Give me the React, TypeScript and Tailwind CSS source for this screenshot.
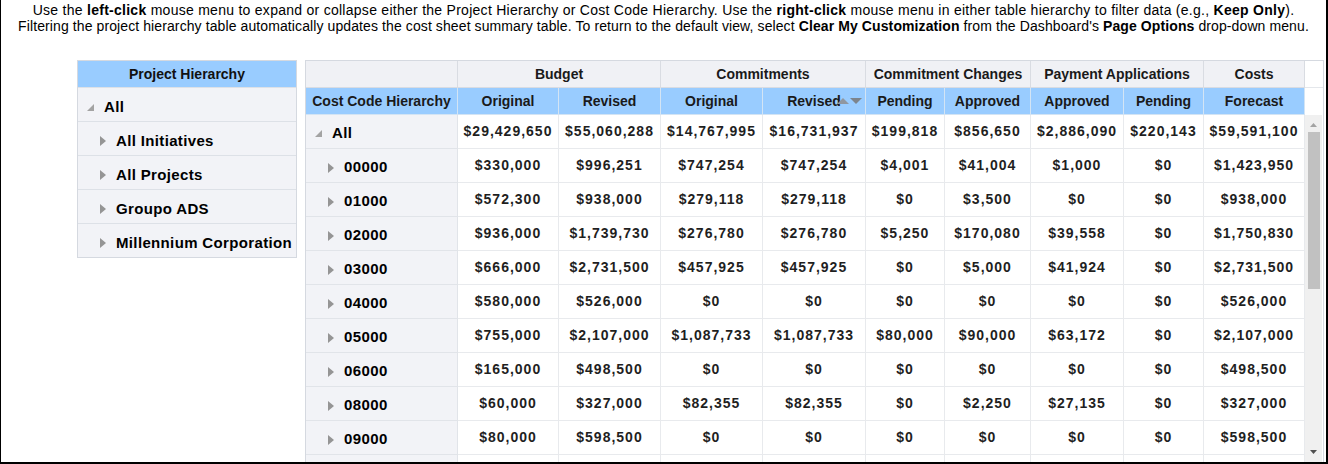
import React from "react";

const cols =
  "grid grid-cols-[152px_101px_102px_102px_103px_79px_86px_93px_80px_101px_18px]";

type Row = { code: string; top?: boolean; values: string[] };

const rows: Row[] = [
  { code: "All", top: true, values: ["$29,429,650", "$55,060,288", "$14,767,995", "$16,731,937", "$199,818", "$856,650", "$2,886,090", "$220,143", "$59,591,100"] },
  { code: "00000", values: ["$330,000", "$996,251", "$747,254", "$747,254", "$4,001", "$41,004", "$1,000", "$0", "$1,423,950"] },
  { code: "01000", values: ["$572,300", "$938,000", "$279,118", "$279,118", "$0", "$3,500", "$0", "$0", "$938,000"] },
  { code: "02000", values: ["$936,000", "$1,739,730", "$276,780", "$276,780", "$5,250", "$170,080", "$39,558", "$0", "$1,750,830"] },
  { code: "03000", values: ["$666,000", "$2,731,500", "$457,925", "$457,925", "$0", "$5,000", "$41,924", "$0", "$2,731,500"] },
  { code: "04000", values: ["$580,000", "$526,000", "$0", "$0", "$0", "$0", "$0", "$0", "$526,000"] },
  { code: "05000", values: ["$755,000", "$2,107,000", "$1,087,733", "$1,087,733", "$80,000", "$90,000", "$63,172", "$0", "$2,107,000"] },
  { code: "06000", values: ["$165,000", "$498,500", "$0", "$0", "$0", "$0", "$0", "$0", "$498,500"] },
  { code: "08000", values: ["$60,000", "$327,000", "$82,355", "$82,355", "$0", "$2,250", "$27,135", "$0", "$327,000"] },
  { code: "09000", values: ["$80,000", "$598,500", "$0", "$0", "$0", "$0", "$0", "$0", "$598,500"] },
];

function Expanded() {
  return (
    <svg width="7" height="7" viewBox="0 0 7 7" className="shrink-0">
      <polygon points="7,0 7,7 0,7" fill="#a3a3a3" />
    </svg>
  );
}

function Collapsed() {
  return (
    <svg width="6" height="10" viewBox="0 0 6 10" className="shrink-0">
      <polygon points="0,0 6,5 0,10" fill="#959595" />
    </svg>
  );
}

function ProjectHierarchy() {
  const items = ["All Initiatives", "All Projects", "Groupo ADS", "Millennium Corporation"];
  return (
    <div className="w-[220px] self-start border border-[#d5d9e0] bg-[#f2f3f7]">
      <div className="h-[26px] bg-[#99ccff] flex items-center justify-center text-[14px] font-bold text-[#111]">
        Project Hierarchy
      </div>
      <div className="h-[34px] border-t border-[#dde1e7] flex items-center pl-[9px] gap-[10px] pt-[5px]">
        <Expanded />
        <span className="text-[15px] font-bold tracking-[0.4px]">All</span>
      </div>
      {items.map((t) => (
        <div key={t} className="h-[34px] border-t border-[#dde1e7] flex items-center pl-[22px] gap-[10px] pt-[5px]">
          <Collapsed />
          <span className="text-[15px] font-bold tracking-[0.35px] whitespace-nowrap">{t}</span>
        </div>
      ))}
    </div>
  );
}

function CostTable() {
  const gray = "h-[27px] bg-[#f0f1f5] border-r border-b border-[#d9dce2] flex items-center justify-center text-[14px] font-bold text-[#1a1a1a] whitespace-nowrap";
  const blue = "h-[27px] bg-[#99ccff] border-r border-b border-[#d3e4f4] flex items-center justify-center text-[14px] font-bold text-[#1a1a1a] whitespace-nowrap";
  const groups = [
    ["Budget", "col-span-2"],
    ["Commitments", "col-span-2"],
    ["Commitment Changes", "col-span-2"],
    ["Payment Applications", "col-span-2"],
    ["Costs", ""],
  ];
  const subs = ["Original", "Revised", "Original", "Revised", "Pending", "Approved", "Approved", "Pending", "Forecast"];
  return (
    <div className="w-[1019px] h-[404px] border-l border-t border-r border-[#d5d9e0] overflow-hidden">
      <div className={cols}>
        <div className={gray}></div>
        {groups.map(([g, span]) => (
          <div key={g} className={`${gray} ${span}`}>{g}</div>
        ))}
        <div className="h-[27px] bg-white border-b border-[#e4e7eb]"></div>

        <div className={blue}>Cost Code Hierarchy</div>
        {subs.map((s, i) => (
          <div key={i} className={`${blue} relative`}>
            {s}
            {i === 3 && (
              <span className="absolute right-[3px] top-[10px] flex gap-[1px]">
                <svg width="12" height="6" viewBox="0 0 12 6">
                  <polygon points="0,6 6,0 12,6" fill="#9097a0" />
                </svg>
                <svg width="12" height="6" viewBox="0 0 12 6">
                  <polygon points="0,0 12,0 6,6" fill="#7d848c" />
                </svg>
              </span>
            )}
          </div>
        ))}
        <div className="h-[27px] bg-white"></div>
      </div>

      <div className="flex">
        <div className="grid grid-cols-[152px_101px_102px_102px_103px_79px_86px_93px_80px_101px]">
          {rows.map((r) => (
            <React.Fragment key={r.code}>
              <div
                className={`h-[34px] bg-[#f2f3f7] border-r border-b border-[#e1e4e9] flex items-center pt-[4px] gap-[10px] ${
                  r.top ? "pl-[9px]" : "pl-[22px]"
                }`}
              >
                {r.top ? <Expanded /> : <Collapsed />}
                <span className="text-[15px] font-bold tracking-[0.4px] text-black">{r.code}</span>
              </div>
              {r.values.map((v, i) => (
                <div
                  key={i}
                  className={`h-[34px] bg-white border-r border-b border-[#e8eaed] flex justify-center text-[14px] font-bold tracking-[1px] text-[#1f1f1f] whitespace-nowrap ${
                    r.top ? "items-start pt-[6px]" : "items-center"
                  }`}
                >
                  {v}
                </div>
              ))}
            </React.Fragment>
          ))}
          <div className="h-[34px] bg-[#f2f3f7] border-r border-[#e1e4e9]"></div>
          {Array.from({ length: 9 }).map((_, i) => (
            <div key={i} className="h-[34px] bg-white border-r border-[#e8eaed]"></div>
          ))}
        </div>
        <div className="w-[17px] h-[350px] bg-[#f0f0f0] flex flex-col items-center">
          <svg width="7" height="4" viewBox="0 0 7 4" className="mt-[8px]">
            <polygon points="0,4 3.5,0 7,4" fill="#a3a3a3" />
          </svg>
          <div className="w-[12px] h-[157px] bg-[#c1c1c1] mt-[5px]"></div>
          <div className="flex-1"></div>
          <svg width="7" height="4" viewBox="0 0 7 4" className="mb-[11px]">
            <polygon points="0,0 7,0 3.5,4" fill="#505050" />
          </svg>
        </div>
      </div>
    </div>
  );
}

export default function App() {
  return (
    <div className="w-[1328px] h-[464px] overflow-hidden bg-white border-l border-r-2 border-b-2 border-black font-['Liberation_Sans',Arial,sans-serif] text-black">
      <div className="h-[60px] pt-[2px] text-[14px] leading-[16px] text-center whitespace-nowrap">
        <div className="tracking-[0.27px]">
          Use the <b>left-click</b> mouse menu to expand or collapse either the Project Hierarchy or Cost Code Hierarchy. Use the{" "}
          <b>right-click</b> mouse menu in either table hierarchy to filter data (e.g., <b>Keep Only</b>).
        </div>
        <div className="tracking-[0.1px]">
          Filtering the project hierarchy table automatically updates the cost sheet summary table. To return to the default view, select{" "}
          <b>Clear My Customization</b> from the Dashboard's <b>Page Options</b> drop-down menu.
        </div>
      </div>
      <div className="flex pl-[76px] gap-[8px]">
        <ProjectHierarchy />
        <CostTable />
      </div>
    </div>
  );
}
